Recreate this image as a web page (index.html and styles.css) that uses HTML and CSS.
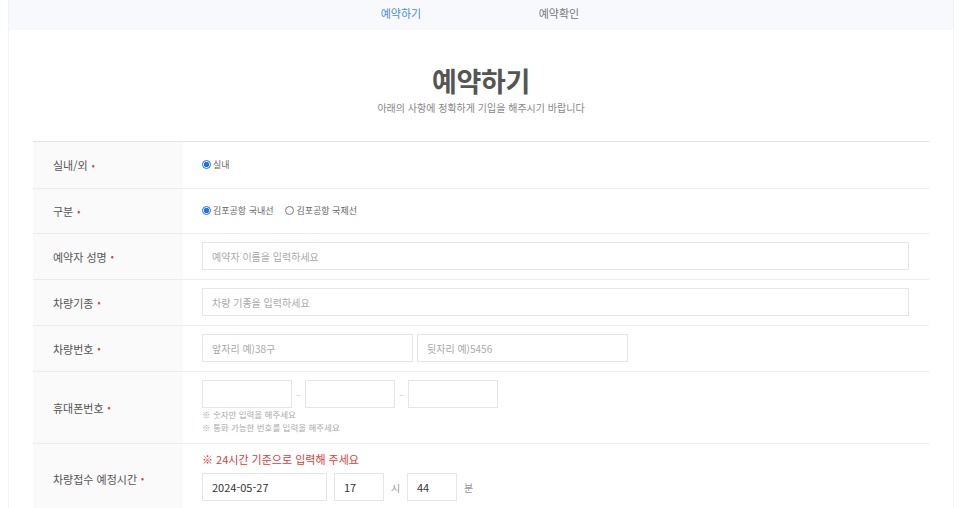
FILE: index.html
```html
<!DOCTYPE html>
<html lang="ko">
<head>
<meta charset="utf-8">
<title>예약하기</title>
<link rel="stylesheet" href="styles.css">
</head>
<body>
<div class="page">
  <nav class="tabs">
    <a class="tab active">예약하기</a>
    <a class="tab">예약확인</a>
  </nav>
  <header class="head">
    <h1>예약하기</h1>
    <p>아래의 사항에 정확하게 기입을 해주시기 바랍니다</p>
  </header>
  <div class="form">
    <div class="row r1">
      <div class="label">실내/외 <span class="req">•</span></div>
      <div class="field">
        <label class="radio"><span class="dot on"></span>실내</label>
      </div>
    </div>
    <div class="row r2">
      <div class="label">구분 <span class="req">•</span></div>
      <div class="field">
        <label class="radio"><span class="dot on"></span>김포공항 국내선</label>
        <label class="radio"><span class="dot"></span>김포공항 국제선</label>
      </div>
    </div>
    <div class="row">
      <div class="label">예약자 성명 <span class="req">•</span></div>
      <div class="field"><div class="input full ph">예약자 이름을 입력하세요</div></div>
    </div>
    <div class="row">
      <div class="label">차량기종 <span class="req">•</span></div>
      <div class="field"><div class="input full ph">차량 기종을 입력하세요</div></div>
    </div>
    <div class="row">
      <div class="label">차량번호 <span class="req">•</span></div>
      <div class="field gap4">
        <div class="input plate ph">앞자리 예)38구</div>
        <div class="input plate ph">뒷자리 예)5456</div>
      </div>
    </div>
    <div class="row r6">
      <div class="label">휴대폰번호 <span class="req">•</span></div>
      <div class="field col">
        <div class="phone">
          <div class="input tel"></div><span class="dash">–</span>
          <div class="input tel"></div><span class="dash">–</span>
          <div class="input tel"></div>
        </div>
        <p class="note first">※ 숫자만 입력을 해주세요</p>
        <p class="note">※ 통화 가능한 번호를 입력을 해주세요</p>
      </div>
    </div>
    <div class="row r7">
      <div class="label">차량접수 예정시간 <span class="req">•</span></div>
      <div class="field col">
        <p class="warn">※ 24시간 기준으로 입력해 주세요</p>
        <div class="time">
          <div class="input date val">2024-05-27</div>
          <div class="input hm first val">17</div><span class="unit">시</span>
          <div class="input hm val">44</div><span class="unit">분</span>
        </div>
      </div>
    </div>
  </div>
</div>
</body>
</html>
```
FILE: styles.css
```css
* { box-sizing: border-box; }
html, body { margin: 0; padding: 0; background: #fff; }
body {
  font-family: "Noto Sans CJK KR", "Noto Sans", sans-serif;
  color: #444;
  width: 966px;
  height: 508px;
  overflow: hidden;
}
.page {
  margin-left: 8px;
  width: 946px;
  min-height: 508px;
  border-left: 1px solid #f1f2f4;
  border-right: 1px solid #f1f2f4;
}
.tabs {
  height: 30px;
  background: #f7f9fc;
  display: flex;
  justify-content: center;
  align-items: center;
  padding-right: 2px;
}
.tab {
  width: 158px;
  text-align: center;
  font-size: 11px;
  color: #777;
  line-height: 1;
  margin-top: -4px;
}
.tab.active { color: #4a90cd; }
.head { text-align: center; padding-top: 33px; height: 111px; }
.head h1 {
  margin: 0;
  font-size: 27px;
  font-weight: 700;
  color: #555;
  line-height: 36px;
  letter-spacing: -0.3px;
}
.head p {
  margin: 2px 0 0;
  font-size: 10px;
  color: #888;
  line-height: 14px;
}
.form {
  margin: 0 24px 0 24px;
  border-top: 1px solid #e4e4e4;
}
.row {
  display: flex;
  border-bottom: 1px solid #ececec;
  min-height: 46px;
}
.row.r1 { min-height: 47px; }
.row.r2 { min-height: 45px; }
.row.r6 { min-height: 72px; }
.row.r7 { min-height: 70px; }
.label {
  width: 150px;
  flex: none;
  background: #fafafa;
  padding-left: 20px;
  display: flex;
  align-items: center;
  font-size: 11px;
  color: #555;
}
.req { color: #e03b3b; font-size: 9px; margin-left: 4px; }
.field {
  flex: 1;
  display: flex;
  align-items: center;
  padding: 0 20px 1px 19px;
}
.field.gap4 { gap: 4px; }
.field.col { flex-direction: column; align-items: flex-start; justify-content: flex-start; }
.r6 .field.col { padding-top: 8px; }
.r7 .field.col { padding-top: 7px; }
.radio {
  display: inline-flex;
  align-items: center;
  font-size: 9px;
  color: #666;
  margin-right: 12px;
}
.dot {
  width: 9px;
  height: 9px;
  border-radius: 50%;
  border: 1px solid #777;
  margin-right: 2px;
  background: #fff;
}
.dot.on {
  border-color: #1a73e8;
  background: radial-gradient(circle, #1a73e8 0 2.5px, #fff 3px);
}
.input {
  height: 28px;
  border: 1px solid #e6e6e6;
  background: #fff;
  display: flex;
  align-items: center;
  padding-left: 9px;
  font-size: 10px;
}
.ph { color: #aaa; }
.val { color: #333; font-size: 11px; }
.full { width: 100%; }
.plate { width: 211px; }
.phone { display: flex; align-items: center; }
.tel { width: 90px; }
.dash { width: 13px; text-align: center; color: #ccc; font-size: 9px; }
.note {
  margin: 0;
  font-size: 8.5px;
  color: #aaa;
  line-height: 13px;
}
.note.first { margin-top: 0; }
.warn {
  margin: 0 0 6px;
  font-size: 11px;
  color: #e0393b;
  line-height: 16px;
}
.time { display: flex; align-items: center; }
.date { width: 125px; }
.hm { width: 50px; }
.hm.first { margin-left: 7px; }
.unit { width: 23px; text-align: center; font-size: 10px; color: #999; }
```
